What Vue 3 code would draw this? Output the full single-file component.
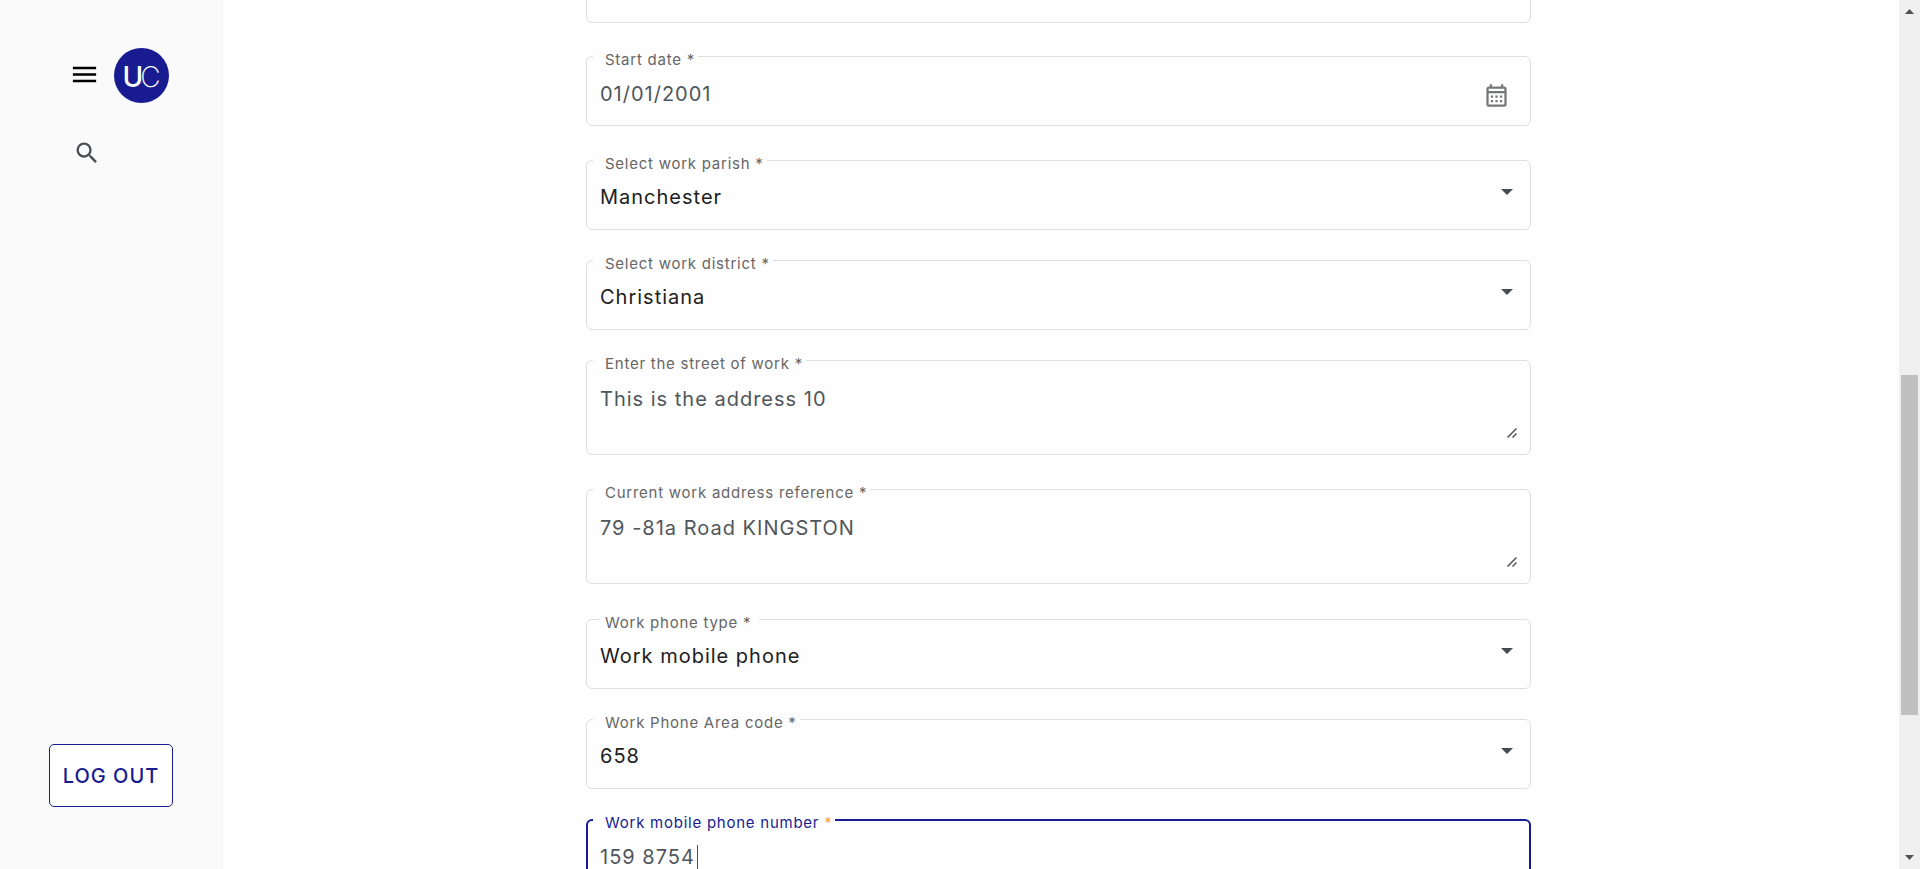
<script setup>
import { ref } from 'vue'

const fields = ref([
  { id: 'start-date', label: 'Start date', kind: 'date', value: '01/01/2001', gap: 'medium' },
  { id: 'parish', label: 'Select work parish', kind: 'select', value: 'Manchester', gap: 'large' },
  { id: 'district', label: 'Select work district', kind: 'select', value: 'Christiana', gap: 'small' },
  { id: 'street', label: 'Enter the street of work', kind: 'textarea', value: 'This is the address 10', gap: 'small' },
  { id: 'reference', label: 'Current work address reference', kind: 'textarea', value: '79 -81a Road KINGSTON', gap: 'large' },
  { id: 'phone-type', label: 'Work phone type', kind: 'select', value: 'Work mobile phone', gap: 'xlarge', wide: true },
  { id: 'area-code', label: 'Work Phone Area code', kind: 'select', value: '658', gap: 'small' },
  { id: 'phone', label: 'Work mobile phone number', kind: 'text', value: '159 8754', gap: 'small', active: true }
])
</script>

<template>
  <div class="page">
    <aside class="sidebar">
      <div class="brand">
        <button class="icon-button menu" type="button" aria-label="Menu">
          <svg viewBox="0 0 24 24" width="31" height="31"><path d="M3 18h18v-2H3v2zm0-5h18v-2H3v2zm0-7v2h18V6H3z" /></svg>
        </button>
        <div class="logo"><span class="logo-u">U</span><span class="logo-c">C</span></div>
      </div>
      <button class="icon-button search" type="button" aria-label="Search">
        <svg viewBox="0 0 24 24" width="28" height="28"><path d="M15.5 14h-.79l-.28-.27A6.471 6.471 0 0 0 16 9.5 6.5 6.5 0 1 0 9.5 16c1.61 0 3.09-.59 4.23-1.57l.27.28v.79l5 4.99L20.49 19l-4.99-5zm-6 0C7.01 14 5 11.99 5 9.5S7.01 5 9.5 5 14 7.01 14 9.5 11.99 14 9.5 14z" /></svg>
      </button>
      <button class="logout" type="button">LOG OUT</button>
    </aside>

    <main class="content">
      <form class="form" @submit.prevent>
        <div class="field"></div>
        <div
          v-for="f in fields"
          :key="f.id"
          class="field"
          :class="[f.kind, 'gap-' + f.gap, { active: f.active, wide: f.wide }]"
        >
          <label :for="f.id">{{ f.label }} <span class="star">*</span></label>
          <select v-if="f.kind === 'select'" :id="f.id" v-model="f.value">
            <option>{{ f.value }}</option>
          </select>
          <textarea v-else-if="f.kind === 'textarea'" :id="f.id" v-model="f.value"></textarea>
          <input v-else :id="f.id" v-model="f.value" type="text" />
          <span v-if="f.active" class="caret"></span>
          <svg v-if="f.kind === 'select'" class="arrow" viewBox="0 0 12 6" width="12" height="6"><path d="M0 0h12L6 6z" /></svg>
          <svg v-if="f.kind === 'textarea'" class="grip" viewBox="0 0 10 10" width="10" height="10"><path d="M.5 9.5l9-9M5.500 9.500l4-4" /></svg>
          <button v-if="f.kind === 'date'" class="icon-button calendar" type="button" aria-label="Calendar">
            <svg viewBox="0 0 24 24" width="27" height="27"><path d="M19 4h-1V2h-2v2H8V2H6v2H5c-1.110 0-1.990.9-1.990 2L3 20a2 2 0 0 0 2 2h14c1.100 0 2-.9 2-2V6c0-1.100-.9-2-2-2zm0 16H5V10h14v10zm0-12H5V6h14v2zM9 14H7v-2h2v2zm4 0h-2v-2h2v2zm4 0h-2v-2h2v2zm-8 4H7v-2h2v2zm4 0h-2v-2h2v2zm4 0h-2v-2h2v2z" /></svg>
          </button>
        </div>
      </form>
    </main>

    <div class="scrollbar">
      <svg class="step" viewBox="0 0 21 21" width="21" height="21"><path d="M6 14h9l-4.500-5z" /></svg>
      <div class="before"></div>
      <div class="thumb"></div>
      <div class="after"></div>
      <svg class="step" viewBox="0 0 21 21" width="21" height="21"><path d="M6 7h9l-4.500 5z" /></svg>
    </div>
  </div>
</template>

<style>
body {
  margin: 0;
  overflow: hidden;
}
</style>

<style scoped>
* {
  box-sizing: border-box;
}

.page {
  display: flex;
  height: 100vh;
  overflow: hidden;
  background: #fefefe;
  font-family: Inter, "Liberation Sans", sans-serif;
}

.sidebar {
  display: flex;
  flex-direction: column;
  align-items: flex-start;
  width: 223px;
  flex-shrink: 0;
  padding: 48px 50px 62px 49px;
  background: #fafafa;
}

.icon-button {
  display: flex;
  padding: 0;
  border: 0;
  background: none;
  cursor: pointer;
}

.icon-button svg {
  fill: currentColor;
}

.brand {
  display: flex;
  align-items: center;
  gap: 14px;
  padding-left: 20px;
}

.menu {
  margin-bottom: 3px;
  color: #000;
}

.logo {
  display: flex;
  align-items: center;
  justify-content: center;
  width: 55px;
  height: 55px;
  padding-top: 2px;
  border-radius: 50%;
  background: #181c90;
  color: #fff;
  font-size: 28px;
  line-height: 28px;
}

.logo-u {
  font-weight: 500;
}

.logo-c {
  margin-left: -3px;
  font-weight: 200;
}

.search {
  margin: 36px 0 0 24px;
  color: #494d52;
}

.logout {
  align-self: stretch;
  height: 63px;
  margin-top: auto;
  padding: 0;
  border: 1px solid #181c90;
  border-radius: 5px;
  background: #fff;
  color: #181c90;
  font: 500 20px/24px Inter, "Liberation Sans", sans-serif;
  letter-spacing: 0.05em;
  white-space: nowrap;
}

.content {
  flex: 1;
  min-width: 0;
  padding-right: 5px;
  overflow: hidden;
}

.form {
  display: flex;
  flex-direction: column;
  max-width: 945px;
  margin: -47px auto 0;
}

.field {
  position: relative;
  display: flex;
  flex-shrink: 0;
  height: 70px;
  padding: 24px 13px 0;
  border: 1px solid #dedede;
  border-radius: 6px;
}

.gap-small {
  margin-top: 30px;
}

.gap-medium {
  margin-top: 33px;
}

.gap-large {
  margin-top: 34px;
}

.gap-xlarge {
  margin-top: 35px;
}

.field.textarea {
  height: 95px;
  padding-top: 26px;
}

.field.date,
.field.text {
  padding-top: 25px;
}

.field label {
  position: absolute;
  top: -7px;
  left: 6px;
  padding: 0 3px 0 12px;
  background: #fefefe;
  color: #666;
  font-size: 15px;
  line-height: 20px;
  letter-spacing: 0.05em;
}

.field.wide label {
  left: 12px;
  padding: 0 8px 0 6px;
}

.field input,
.field select,
.field textarea {
  width: 100%;
  height: 24px;
  margin: 0;
  padding: 0;
  border: 0;
  outline: 0;
  appearance: none;
  background: none;
  color: #50565b;
  font: 400 20px/24px Inter, "Liberation Sans", sans-serif;
  letter-spacing: 0.05em;
}

.field select {
  color: #202020;
}

.field textarea {
  height: 52px;
  resize: none;
  overflow: hidden;
}

.arrow {
  position: absolute;
  top: 28px;
  right: 17px;
  fill: #464b50;
  pointer-events: none;
}

.grip {
  position: absolute;
  right: 13px;
  bottom: 16px;
  fill: none;
  stroke: #555;
  stroke-width: 1.5;
  pointer-events: none;
}

.calendar {
  height: 27px;
  margin-right: 7px;
  color: #75767a;
}

.field.active {
  padding: 24px 12px 0;
  border: 2px solid #181c90;
}

.field.active label {
  top: -8px;
  left: 5px;
  color: #181c90;
}

.field.active .star {
  color: #f9a825;
}

.field.active input {
  width: auto;
  field-sizing: content;
}

.caret {
  width: 1px;
  height: 26px;
  margin-left: 2px;
  background: #7b3079;
}

.scrollbar {
  display: flex;
  flex-direction: column;
  width: 21px;
  flex-shrink: 0;
  background: #f0f0f0;
}

.step {
  flex-shrink: 0;
  fill: #505050;
}

.before {
  flex: 354;
}

.thumb {
  flex: 340;
  margin: 0 2px;
  background: #c0c0c0;
}

.after {
  flex: 133;
}
</style>
